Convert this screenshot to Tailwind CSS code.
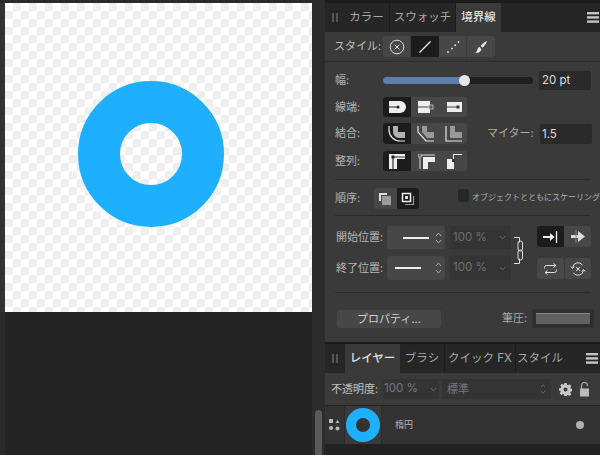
<!DOCTYPE html>
<html>
<head>
<meta charset="utf-8">
<script src="https://cdn.jsdelivr.net/npm/@tailwindcss/browser@4"></script>
</head>
<body class="w-[600px] h-[455px] overflow-hidden bg-[#222] font-['Inter','Noto_Sans_CJK_JP',sans-serif] text-[11px] text-[#b5b5b5]">
<div class="flex w-[600px] h-[455px]">
    <!--canvas-->
    <div class="w-[312px] h-full flex-none bg-[#232323]">
        <div class="h-[3px] bg-[#2b2b2b]"></div>
        <div class="flex h-[309px]">
            <div class="w-[5px] bg-[#333]"></div>
            <div class="w-[307px] flex items-center justify-center bg-white bg-[conic-gradient(#efefef_25%,#fff_0_50%,#efefef_0_75%,#fff_0)] [background-size:16px_16px]">
                <svg width="146" height="146" viewBox="0 0 146 146" class="mr-[15px] mt-[-8px]"><circle cx="73" cy="73" r="52" fill="none" stroke="#1fafff" stroke-width="42"/></svg>
            </div>
        </div>
        <div class="h-[143px] border-l-[5px] border-[#2b2b2b]"></div>
    </div>
    <!--scroll gutter-->
    <div class="w-[13px] h-full flex-none bg-[#2c2c2c] pt-[410px] pl-[3px]">
        <div class="w-[7px] h-[45px] bg-[#5a5a5a] rounded-t-full"></div>
    </div>
    <!--panels-->
    <div class="w-[275px] h-full flex-none bg-[#222] flex flex-col">
        <div class="h-[3px] bg-[#1b1b1b]"></div>
        <!--tabs top-->
        <div class="h-[29px] flex items-stretch bg-[#262626] text-[#a8a8a8] text-[11.5px]">
            <div class="w-[19px] flex items-center justify-center gap-[2px]"><i class="w-[2px] h-[9px] bg-[#555]"></i><i class="w-[2px] h-[9px] bg-[#555]"></i></div>
            <div class="w-[46px] flex items-center justify-center border-r border-[#1c1c1c]">カラー</div>
            <div class="w-[66px] flex items-center justify-center border-r border-[#1c1c1c]">スウォッチ</div>
            <div class="w-[45px] flex items-center justify-center bg-[#3a3a3a] text-[#e0e0e0] font-medium">境界線</div>
            <div class="flex-1 flex items-center justify-end pr-[1px]">
                <svg width="12" height="11" viewBox="0 0 12 11" fill="#c4c4c4"><rect width="12" height="2.4"/><rect y="4.2" width="12" height="2.4"/><rect y="8.4" width="12" height="2.4"/></svg>
            </div>
        </div>
        <div class="h-[310px] bg-[#3a3a3a] flex flex-col">
            <!--style row-->
            <div class="h-[30px] flex-none flex items-center pl-[9px] border-b border-[#2d2d2d] text-[#c0c0c0]">
                <span class="w-[49px]">スタイル:</span>
                <div class="flex rounded-[3px] overflow-hidden bg-[#474747] h-[21px]">
                    <div class="w-[28px] flex items-center justify-center border-r border-[#3c3c3c]"><svg width="16" height="16" viewBox="0 0 16 16" fill="none" stroke="#e0e0e0"><circle cx="8" cy="8" r="6.8"/><path d="M5.7 5.7l4.6 4.6M10.3 5.7l-4.6 4.6"/></svg></div>
                    <div class="w-[28px] flex items-center justify-center bg-[#1c1c1c]"><svg width="14" height="14" viewBox="0 0 14 14" stroke="#eee" stroke-width="1.3"><path d="M1.5 12.5L12.5 1.5"/></svg></div>
                    <div class="w-[28px] flex items-center justify-center border-r border-[#3c3c3c]"><svg width="14" height="14" viewBox="0 0 14 14" fill="#ddd"><circle cx="2" cy="12" r="1"/><circle cx="6" cy="8.5" r="1"/><circle cx="9.2" cy="5.2" r="1"/><circle cx="12.5" cy="2" r=".9"/></svg></div>
                    <div class="w-[28px] flex items-center justify-center"><svg width="14" height="14" viewBox="0 0 14 14" fill="#e4e4e4"><path d="M13 1c-2 .6-5 3-6.400 5l2 1.800C10.400 6 12.600 3 13 1zM5.800 7C4 7.200 3.600 8.600 3.200 10.200 2.800 11.400 2 12 1 12.500c2.500.8 5.600.2 6.400-3z"/></svg></div>
                </div>
            </div>
            <!--width row-->
            <div class="mt-[8px] h-[20px] flex-none flex items-center pl-[10px]">
                <span class="w-[48px]">幅:</span>
                <div class="relative w-[150px] h-[7px] rounded-full bg-[#1f1f1f]">
                    <div class="w-[81px] h-full rounded-l-full bg-[#5b7fa8]"></div>
                    <div class="absolute left-[76px] top-[-2px] w-[11px] h-[11px] rounded-full bg-[#e6e6e6]"></div>
                </div>
                <div class="ml-[6px] w-[52px] h-[19px] leading-[19px] pl-[3px] bg-[#2a2a2a] rounded-[2px] text-[#ddd] text-[11.5px]">20 pt</div>
            </div>
            <!--cap-->
            <div class="mt-[7px] h-[20px] flex-none flex items-center pl-[10px]">
                <span class="w-[48px]">線端:</span>
                <div class="flex rounded-[3px] overflow-hidden bg-[#474747] h-[20px]">
                    <div class="w-[28px] flex items-center justify-center bg-[#1c1c1c]"><svg width="18" height="12" viewBox="0 0 18 12"><path d="M1 0h11a6 6 0 0 1 0 12H1z" fill="#eee"/><path d="M1 6h9" stroke="#222" stroke-width="1.200"/><circle cx="10" cy="6" r="1.500" fill="#222"/></svg></div>
                    <div class="w-[30px] flex items-center justify-center"><svg width="18" height="12" viewBox="0 0 18 12"><path d="M1 0h12v12H1z" fill="#eee"/><path d="M1 6h12" stroke="#444" stroke-width="1.200"/><rect x="12" y="4" width="4" height="4" fill="#555" stroke="#ddd" stroke-width=".7"/></svg></div>
                    <div class="w-[26px] flex items-center justify-center"><svg width="17" height="12" viewBox="0 0 17 12"><path d="M1 1h15v10H1z" fill="#eee"/><path d="M1 6h11" stroke="#444" stroke-width="1.200"/><rect x="10.500" y="4.500" width="3" height="3" fill="#333"/></svg></div>
                </div>
            </div>
            <!--join-->
            <div class="mt-[6px] h-[21px] flex-none flex items-center pl-[10px]">
                <span class="w-[48px]">結合:</span>
                <div class="flex rounded-[3px] overflow-hidden bg-[#474747] h-[21px]">
                    <div class="w-[28px] flex items-center justify-center bg-[#1c1c1c]"><svg width="18" height="16" viewBox="0 0 18 16"><path d="M1 0v4a11 11 0 0 0 11 11h5" fill="none" stroke="#e8e8e8" stroke-width="1.200"/><path d="M5 0h5v6h7v6h-6a6 6 0 0 1-6-6z" fill="#b0b0b0"/></svg></div>
                    <div class="w-[30px] flex items-center justify-center"><svg width="18" height="16" viewBox="0 0 18 16"><path d="M1 0v6l8 9h8" fill="none" stroke="#e8e8e8" stroke-width="1.200"/><path d="M5 0h5v6h7v6h-7L5 6z" fill="#999"/></svg></div>
                    <div class="w-[26px] flex items-center justify-center"><svg width="18" height="16" viewBox="0 0 18 16"><path d="M1 0v15h16" fill="none" stroke="#e8e8e8" stroke-width="1.200"/><path d="M5 0h5v6h7v6H5z" fill="#999"/></svg></div>
                </div>
                <span class="ml-[20px] w-[53px] text-[#aaa]">マイター:</span>
                <div class="w-[52px] h-[20px] leading-[20px] pl-[2px] bg-[#2a2a2a] rounded-[2px] text-[#ddd] text-[11.5px]">1.5</div>
            </div>
            <!--align-->
            <div class="mt-[7px] h-[20px] flex-none flex items-center pl-[10px]">
                <span class="w-[48px]">整列:</span>
                <div class="flex rounded-[3px] overflow-hidden bg-[#474747] h-[20px]">
                    <div class="w-[28px] flex items-center justify-center bg-[#1c1c1c]"><svg width="16" height="15" viewBox="0 0 16 15"><path d="M0 0h16v5H8v10H0z" fill="#eee"/><path d="M4 15V3h12" fill="none" stroke="#333" stroke-width="1.200"/><rect x="2.500" y="1.500" width="3" height="3" fill="#222"/></svg></div>
                    <div class="w-[30px] flex items-center justify-center"><svg width="17" height="15" viewBox="0 0 17 15"><path d="M5 3h12v5h-7v7H5z" fill="#eee"/><path d="M2 15V1h15" fill="none" stroke="#ddd"/><rect x=".5" y="0" width="3" height="3" fill="#555" stroke="#ddd" stroke-width=".6"/></svg></div>
                    <div class="w-[26px] flex items-center justify-center"><svg width="15" height="15" viewBox="0 0 15 15"><path d="M0 5h6V0h9v1H7v6h0v8H0z" fill="#eee"/><rect x="5" y="5" width="3" height="3" fill="#333"/></svg></div>
                </div>
            </div>
            <div class="mt-[8px] mx-[10px] h-px flex-none bg-[#2a2a2a]"></div>
            <!--order-->
            <div class="mt-[8px] h-[21px] flex-none flex items-center pl-[10px]">
                <span class="w-[48px]">順序:</span>
                <div class="flex rounded-[3px] overflow-hidden bg-[#474747] h-[21px]">
                    <div class="w-[28px] flex items-center justify-center"><svg width="14" height="14" viewBox="0 0 14 14"><path d="M1 1h8v2H3v6H1z" fill="#ddd"/><rect x="4" y="4" width="9" height="9" fill="#9a9a9a"/></svg></div>
                    <div class="w-[28px] flex items-center justify-center bg-[#1c1c1c]"><svg width="14" height="14" viewBox="0 0 14 14" fill="none"><rect x="1.500" y="1.500" width="8" height="8" stroke="#eee" stroke-width="1.500"/><rect x="4" y="4" width="3" height="3" fill="#ddd"/><path d="M12.500 4v8.500H4" stroke="#999" stroke-width="1.200"/></svg></div>
                </div>
                <div class="ml-[39px] mt-[-6px] w-[13px] h-[13px] rounded-[3px] bg-[#272727]"></div>
                <span class="ml-[3px] mt-[-4px] text-[8px] whitespace-nowrap text-[#b0b0b0]">オブジェクトとともにスケーリング</span>
            </div>
            <div class="mt-[6px] mx-[10px] h-px flex-none bg-[#2a2a2a]"></div>
            <!--start/end-->
            <div class="mt-[10px] h-[54px] flex-none flex pl-[11px] relative">
                <div class="flex flex-col gap-[7px]">
                    <div class="h-[23px] flex items-center">
                        <span class="w-[50px] text-[11px] whitespace-nowrap">開始位置:</span>
                        <div class="ml-[1px] w-[58px] h-[23px] rounded-[3px] bg-[#474747] flex items-center pl-[16px]">
                            <i class="w-[26px] h-[2px] bg-[#eee]"></i>
                            <svg class="ml-[6px]" width="7" height="12" viewBox="0 0 7 12" fill="none" stroke="#aaa"><path d="M1 4l2.500-3L6 4M1 8l2.500 3L6 8"/></svg>
                        </div>
                        <div class="ml-[5px] w-[61px] h-[23px] bg-[#343434] flex items-center pl-[3px] text-[#6f6f6f] text-[11.5px]">100 %<svg class="ml-[12px]" width="7" height="5" viewBox="0 0 7 5" fill="none" stroke="#666"><path d="M1 1l2.500 3L6 1"/></svg></div>
                    </div>
                    <div class="h-[24px] flex items-center">
                        <span class="w-[50px] text-[11px] whitespace-nowrap">終了位置:</span>
                        <div class="ml-[1px] w-[58px] h-[24px] rounded-[3px] bg-[#474747] flex items-center pl-[8px]">
                            <i class="w-[26px] h-[2px] bg-[#eee]"></i>
                            <svg class="ml-[14px]" width="7" height="12" viewBox="0 0 7 12" fill="none" stroke="#aaa"><path d="M1 4l2.500-3L6 4M1 8l2.500 3L6 8"/></svg>
                        </div>
                        <div class="ml-[5px] w-[61px] h-[24px] bg-[#343434] flex items-center pl-[3px] text-[#6f6f6f] text-[11.5px]">100 %<svg class="ml-[12px]" width="7" height="5" viewBox="0 0 7 5" fill="none" stroke="#666"><path d="M1 1l2.500 3L6 1"/></svg></div>
                    </div>
                </div>
                <!--link-->
                <svg class="ml-[3px] mt-[11px]" width="12" height="28" viewBox="0 0 12 28" fill="none" stroke="#ddd"><path d="M0 .5h5.500v5M0 26.500h5.500v-5"/><rect x="4" y="4" width="4.500" height="10" rx="2"/><rect x="4" y="13" width="4.500" height="10" rx="2"/></svg>
                <div class="ml-[11px] flex flex-col gap-[11px]">
                    <div class="flex h-[21px] rounded-[3px] overflow-hidden bg-[#474747]">
                        <div class="w-[27px] flex items-center justify-center bg-[#1c1c1c]"><svg width="16" height="12" viewBox="0 0 16 12"><path d="M0 5h7V2l4.500 4L7 10V7H0z" fill="#eee"/><path d="M13.500 0v12" stroke="#eee" stroke-width="1.300"/></svg></div>
                        <div class="w-[27px] flex items-center justify-center"><svg width="16" height="13" viewBox="0 0 16 13"><path d="M1 5h7V1l7 5.500L8 12V8H1z" fill="#ddd"/><path d="M6 0v13" stroke="#888"/></svg></div>
                    </div>
                    <div class="flex gap-[1px] h-[21px]">
                        <div class="w-[27px] rounded-[3px] bg-[#474747] flex items-center justify-center"><svg width="15" height="14" viewBox="0 0 15 14" fill="none" stroke="#ddd"><path d="M13 3.500H3.500a2 2 0 0 0-2 2v1M2 10.500h9.500a2 2 0 0 0 2-2v-1"/><path d="M10.500 1.500l2.500 2-2.500 2M4.500 8.500l-2.500 2 2.500 2"/></svg></div>
                        <div class="w-[26px] rounded-[3px] bg-[#474747] flex items-center justify-center"><svg width="16" height="14" viewBox="0 0 16 14" fill="none" stroke="#ddd"><path d="M2.500 5.500a5.600 5.600 0 0 1 10-2.500M13.500 8.500a5.600 5.600 0 0 1-10 2.500"/><path d="M.8 4.500l1.700 2 1.800-2M15.200 9.500l-1.700-2-1.800 2M6 5l4 4M10 5l-4 4"/></svg></div>
                    </div>
                </div>
            </div>
            <div class="mt-[12px] mx-[10px] h-px flex-none bg-[#2a2a2a]"></div>
            <!--properties-->
            <div class="mt-[16px] h-[19px] flex-none flex items-center pl-[12px]">
                <div class="w-[104px] h-[18px] leading-[18px] rounded-[3px] bg-[#474747] text-center text-[#d0d0d0] text-[11px]">プロパティ...</div>
                <span class="ml-[61px] w-[27px] text-[#a8a8a8] whitespace-nowrap">筆圧:</span>
                <div class="ml-[3px] w-[62px] h-[19px] bg-[#2e2e2e] p-[3px] border border-[#333]"><div class="w-full h-full bg-[#606060] border-t border-[#8a8a8a]"></div></div>
            </div>
        </div>
        <div class="h-[2px] bg-[#1b1b1b]"></div>
        <!--tabs bottom-->
        <div class="h-[29px] flex items-stretch bg-[#262626] text-[#a8a8a8] text-[11.5px]">
            <div class="w-[20px] flex items-center justify-center gap-[2px]"><i class="w-[2px] h-[9px] bg-[#555]"></i><i class="w-[2px] h-[9px] bg-[#555]"></i></div>
            <div class="w-[55px] flex items-center justify-center bg-[#3a3a3a] text-[#e0e0e0] font-medium">レイヤー</div>
            <div class="w-[45px] flex items-center justify-center border-r border-[#1c1c1c]">ブラシ</div>
            <div class="w-[71px] flex items-center justify-center border-r border-[#1c1c1c] whitespace-nowrap">クイック FX</div>
            <div class="w-[48px] flex items-center justify-center">スタイル</div>
            <div class="flex-1 flex items-center justify-end pr-[2px]">
                <svg width="12" height="11" viewBox="0 0 12 11" fill="#c4c4c4"><rect width="12" height="2.400"/><rect y="4.200" width="12" height="2.400"/><rect y="8.400" width="12" height="2.400"/></svg>
            </div>
        </div>
        <!--opacity row-->
        <div class="h-[33px] flex items-center pl-[6px] bg-[#3a3a3a] border-b border-[#222]">
            <span class="w-[52px] whitespace-nowrap text-[#c0c0c0]">不透明度:</span>
            <div class="w-[56px] h-[20px] bg-[#343434] flex items-center pl-[1px] text-[#787878] text-[11.5px]">100 %<svg class="ml-[12px]" width="7" height="5" viewBox="0 0 7 5" fill="none" stroke="#666"><path d="M1 1l2.500 3L6 1"/></svg></div>
            <div class="ml-[3px] w-[109px] h-[20px] bg-[#343434] flex items-center justify-between px-[5px] text-[#787878]">標準<svg width="6" height="12" viewBox="0 0 7 12" fill="none" stroke="#666"><path d="M1 4l2.500-3L6 4M1 8l2.500 3L6 8"/></svg></div>
            <svg class="ml-[8px]" width="13" height="13" viewBox="0 0 13 13"><path fill="#c8c8c8" fill-rule="evenodd" d="M5.300 0h2.400l.3 1.800 1.100.5 1.500-1 1.700 1.700-1 1.500.5 1.100 1.700.3v2.400l-1.700.3-.5 1.100 1 1.500-1.700 1.700-1.500-1-1.100.5-.3 1.700H5.300L5 11.400l-1.100-.5-1.500 1L.700 10.200l1-1.500-.5-1.100L0 7.700V5.300l1.800-.3.500-1.100-1-1.500L3 .7l1.500 1L5 1.800zM6.500 4.500a2 2 0 1 0 0 4 2 2 0 0 0 0-4z"/></svg>
            <svg class="ml-[8px]" width="9" height="15" viewBox="0 0 9 15"><path d="M1.500 7V3.500a3 3 0 0 1 6 0V4" fill="none" stroke="#aaa" stroke-width="1.200"/><rect y="6.500" width="9" height="8" fill="#bbb"/></svg>
        </div>
        <!--layer row-->
        <div class="h-[38px] flex items-center bg-[#333] ">
            <div class="w-[19px] flex items-center justify-center"><svg width="11" height="12" viewBox="0 0 11 12" fill="#bbb"><rect x="0" y="0" width="4" height="4"/><path d="M8.500 1l2 3h-4z"/><circle cx="2" cy="9" r="2"/><circle cx="8.500" cy="9.500" r="2"/></svg></div>
            <div class="w-[38px] h-[38px] bg-[#3a3a3a] flex items-center justify-center border-x border-[#2b2b2b]">
                <svg width="34" height="34" viewBox="0 0 34 34"><circle cx="17" cy="17" r="12" fill="#333" stroke="#1fafff" stroke-width="10"/></svg>
            </div>
            <span class="ml-[13px] text-[9px] text-[#b5b5b5]">楕円</span>
            <div class="ml-auto mr-[16px] w-[8px] h-[8px] rounded-full bg-[#b0b0b0]"></div>
        </div>
        <div class="flex-1 bg-[#222]"></div>
    </div>
</div>
</body>
</html>
